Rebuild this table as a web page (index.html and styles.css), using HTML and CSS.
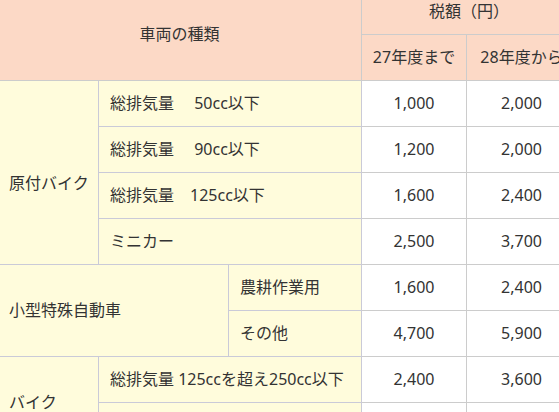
FILE: index.html
```html
<!DOCTYPE html>
<html lang="ja">
<head>
<meta charset="utf-8">
<title>軽自動車税</title>
<link rel="stylesheet" href="styles.css">
</head>
<body>
<table class="tax">
  <colgroup>
    <col class="c-cat">
    <col class="c-sub">
    <col class="c-sub2">
    <col class="c-y27">
    <col class="c-y28">
  </colgroup>
  <thead>
    <tr>
      <th rowspan="2" colspan="3">車両の種類</th>
      <th colspan="2">税額（円）</th>
    </tr>
    <tr>
      <th>27年度まで</th>
      <th>28年度から</th>
    </tr>
  </thead>
  <tbody>
    <tr>
      <td class="label low" rowspan="4">原付バイク</td>
      <td class="label" colspan="2">総排気量　&nbsp;50cc以下</td>
      <td class="num">1,000</td>
      <td class="num">2,000</td>
    </tr>
    <tr>
      <td class="label" colspan="2">総排気量　&nbsp;90cc以下</td>
      <td class="num">1,200</td>
      <td class="num">2,000</td>
    </tr>
    <tr>
      <td class="label" colspan="2">総排気量　125cc以下</td>
      <td class="num">1,600</td>
      <td class="num">2,400</td>
    </tr>
    <tr>
      <td class="label" colspan="2">ミニカー</td>
      <td class="num">2,500</td>
      <td class="num">3,700</td>
    </tr>
    <tr>
      <td class="label" rowspan="2" colspan="2">小型特殊自動車</td>
      <td class="label">農耕作業用</td>
      <td class="num">1,600</td>
      <td class="num">2,400</td>
    </tr>
    <tr>
      <td class="label">その他</td>
      <td class="num">4,700</td>
      <td class="num">5,900</td>
    </tr>
    <tr>
      <td class="label" rowspan="2">バイク</td>
      <td class="label" colspan="2">総排気量 125ccを超え250cc以下</td>
      <td class="num">2,400</td>
      <td class="num">3,600</td>
    </tr>
    <tr>
      <td class="label" colspan="2">総排気量 250ccを超える</td>
      <td class="num">4,000</td>
      <td class="num">6,000</td>
    </tr>
  </tbody>
</table>
</body>
</html>
```

FILE: styles.css
```css
html, body {
  margin: 0;
  padding: 0;
  overflow: hidden;
  background: #ffffff;
}

body {
  font-family: "Noto Sans", "Noto Sans CJK JP", sans-serif;
  font-size: 16px;
  color: #333333;
}

.tax {
  border-collapse: collapse;
  table-layout: fixed;
  width: 579px;
  margin: -12px 0 0 -3px;
}

.c-cat { width: 101px; }
.c-sub { width: 130px; }
.c-sub2 { width: 133px; }
.c-y27 { width: 105px; }
.c-y28 { width: 110px; }

.tax th,
.tax td {
  border: 1px solid #cccccc;
  padding: 11px 11px;
  line-height: 23px;
  white-space: nowrap;
  overflow: hidden;
}

.tax th {
  background: #fcd9c6;
  font-weight: normal;
  text-align: center;
  padding-left: 4px;
  padding-right: 4px;
}

.tax td.label {
  background: #fffcdc;
  border-color: #cacad8;
  text-align: left;
}

.tax td.low {
  padding-top: 33px;
}

.tax td.num {
  background: #ffffff;
  text-align: center;
}
```
